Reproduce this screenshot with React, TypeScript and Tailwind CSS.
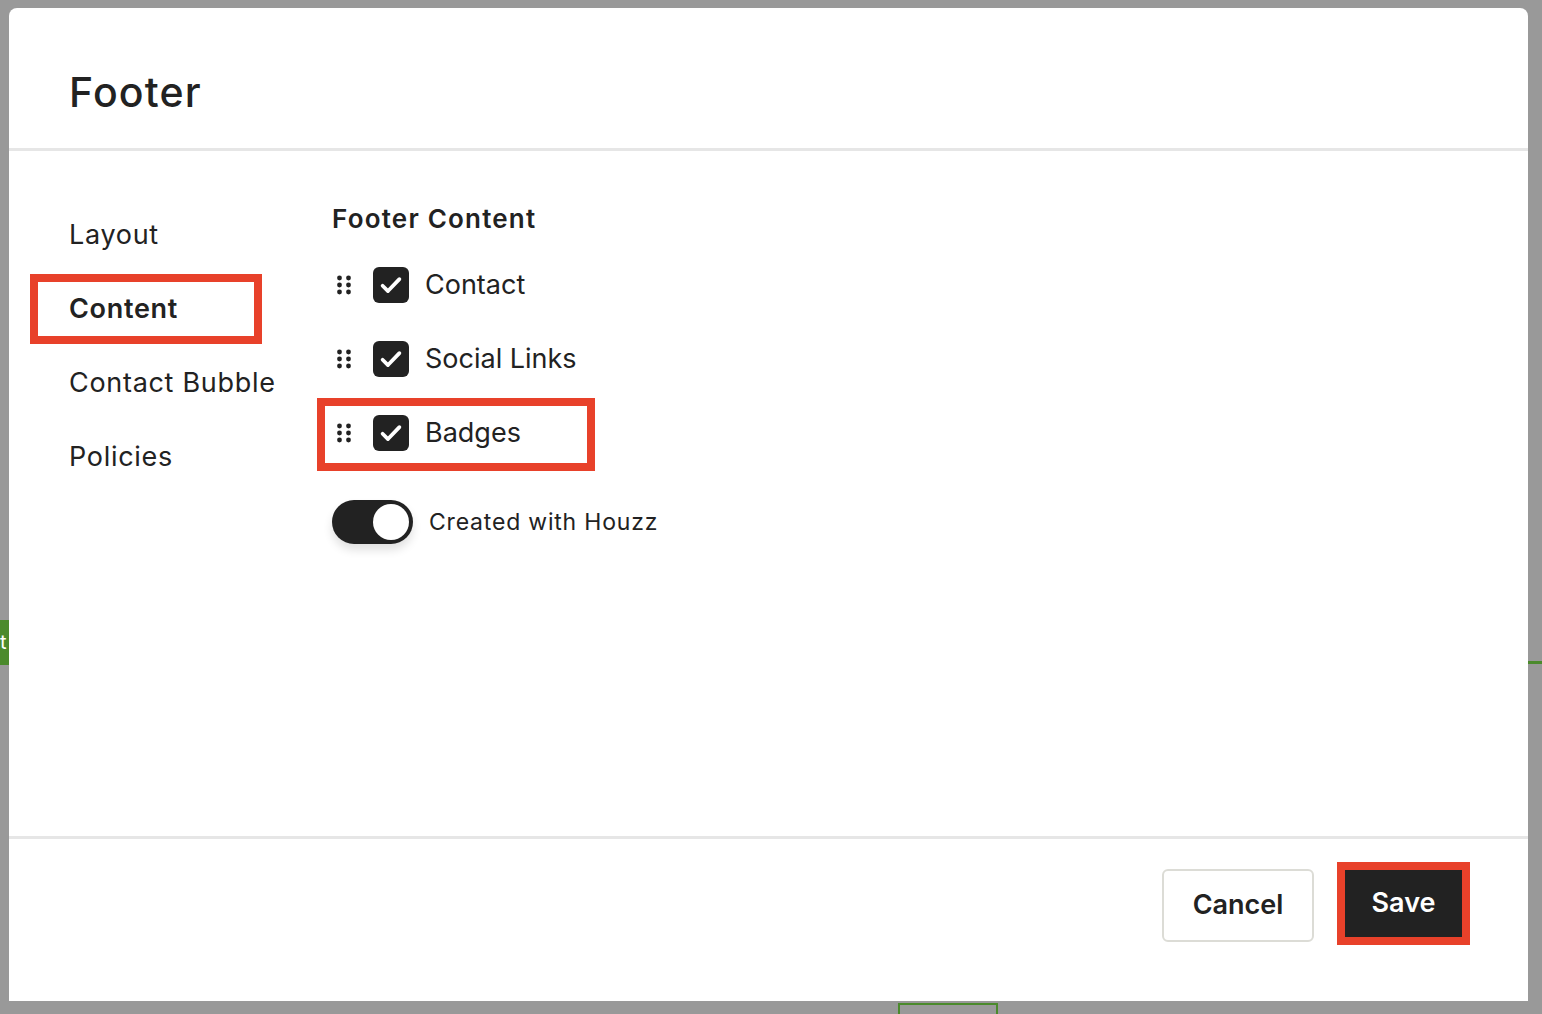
import { useState } from "react";

const RED = "border-[#e8412a]";

const DragHandle = () => (
  <svg width="14" height="20" viewBox="0 0 14 20" className="ml-[5px] shrink-0">
    {[3, 10, 17].map((y) =>
      [2.5, 11.5].map((x) => <circle key={`${x}-${y}`} cx={x} cy={y} r="2.4" fill="#222" />)
    )}
  </svg>
);

const Check = () => (
  <div className="ml-[22px] w-[36px] h-[36px] rounded-[6px] bg-[#222] flex items-center justify-center shrink-0">
    <svg width="28" height="28" viewBox="0 0 24 24" fill="none">
      <path d="M4.8 12.6l4.6 4.6L19.2 7" stroke="white" strokeWidth="3.2" strokeLinecap="round" strokeLinejoin="round" />
    </svg>
  </div>
);

interface RowProps {
  label: string;
  marked?: boolean;
}

const ContentRow = ({ label, marked }: RowProps) => (
  <div className="relative h-[74px] flex items-center">
    <DragHandle />
    <Check />
    <span className="ml-[16px] text-[27px] text-[#222]">{label}</span>
    {marked && (
      <span className={`absolute left-[-15px] top-[2px] w-[278px] h-[73px] border-[8px] ${RED}`} />
    )}
  </div>
);

const navItems = ["Layout", "Content", "Contact Bubble", "Policies"];

export default function App() {
  const [on] = useState(true);

  return (
    <div className="relative w-full h-[1014px] bg-[#999999] overflow-hidden pl-[9px] pt-[8px] font-['Inter',sans-serif] text-[#222]">
      {/* page behind the overlay */}
      <div className="absolute left-0 top-[620px] w-[9px] h-[45px] bg-[#4b8a2c] text-white text-[20px] leading-[45px] overflow-hidden">
        t
      </div>
      <div className="absolute right-0 top-[661px] w-[14px] h-[3px] bg-[#4b8a2c]" />
      <div className="absolute left-[898px] top-[1003px] w-[100px] h-[20px] border-2 border-[#4b8a2c]" />

      <div className="relative w-[1519px] h-[993px] bg-white rounded-t-[8px] flex flex-col">
        <div className="h-[143px] shrink-0 px-[60px] pt-[30px] flex items-center border-b-[3px] border-[#e6e6e6]">
          <h1 className="text-[41px] font-medium tracking-[1.2px]">Footer</h1>
        </div>

        <div className="flex-1 flex">
          <div className="w-[323px] shrink-0 pl-[60px] pt-[47px]">
            {navItems.map((item) => (
              <div key={item} className="relative h-[74px] flex items-center">
                <span className={`text-[27px] tracking-[0.7px] ${item === "Content" ? "font-semibold" : ""}`}>{item}</span>
                {item === "Content" && (
                  <span className={`absolute left-[-39px] top-[2px] w-[232px] h-[70px] border-[8px] ${RED}`} />
                )}
              </div>
            ))}
          </div>

          <div className="pt-[51px]">
            <div className="h-[32px] flex items-center text-[26px] font-semibold tracking-[1.2px]">Footer Content</div>
            <div className="mt-[14px]">
              <ContentRow label="Contact" />
              <ContentRow label="Social Links" />
              <ContentRow label="Badges" marked />
            </div>
            <div className="mt-[30px] flex items-center">
              <div className="w-[81px] h-[44px] rounded-full bg-[#222] p-[4px] flex justify-end shadow-[0_6px_10px_rgba(0,0,0,0.12)]">
                {on && <div className="w-[36px] h-[36px] rounded-full bg-white" />}
              </div>
              <span className="ml-[16px] text-[23px] tracking-[0.8px]">Created with Houzz</span>
            </div>
          </div>
        </div>

        <div className="h-[165px] shrink-0 border-t-[3px] border-[#e6e6e6] flex items-start justify-end pr-[58px]">
          <button className="mt-[30px] w-[152px] h-[73px] rounded-[6px] border-2 border-[#dcdcd6] text-[27px] font-semibold">
            Cancel
          </button>
          <div className={`mt-[23px] ml-[23px] w-[133px] h-[83px] border-[8px] ${RED}`}>
            <button className="w-full h-full bg-[#222] text-white text-[27px] font-semibold">Save</button>
          </div>
        </div>
      </div>
    </div>
  );
}
